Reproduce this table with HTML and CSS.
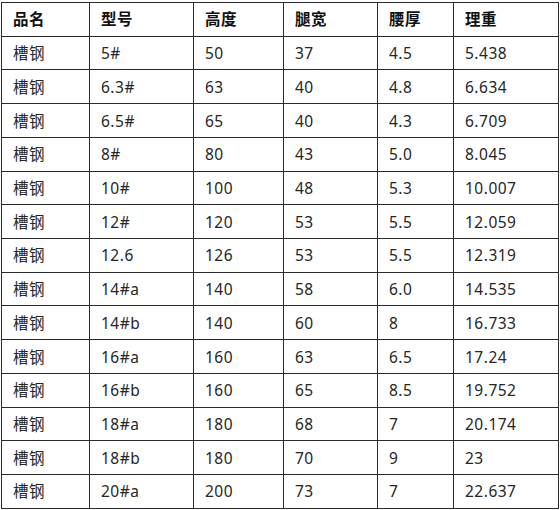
FILE: index.html
```html
<!DOCTYPE html>
<html lang="zh">
<head>
<meta charset="utf-8">
<link rel="stylesheet" href="styles.css">
</head>
<body>
<div class="wrap">
<table class="spec">
<colgroup>
<col class="c1"><col class="c2"><col class="c3"><col class="c4"><col class="c5"><col class="c6">
</colgroup>
<thead>
<tr><th>品名</th><th>型号</th><th>高度</th><th>腿宽</th><th>腰厚</th><th>理重</th></tr>
</thead>
<tbody>
<tr><td>槽钢</td><td>5#</td><td>50</td><td>37</td><td>4.5</td><td>5.438</td></tr>
<tr><td>槽钢</td><td>6.3#</td><td>63</td><td>40</td><td>4.8</td><td>6.634</td></tr>
<tr><td>槽钢</td><td>6.5#</td><td>65</td><td>40</td><td>4.3</td><td>6.709</td></tr>
<tr><td>槽钢</td><td>8#</td><td>80</td><td>43</td><td>5.0</td><td>8.045</td></tr>
<tr><td>槽钢</td><td>10#</td><td>100</td><td>48</td><td>5.3</td><td>10.007</td></tr>
<tr><td>槽钢</td><td>12#</td><td>120</td><td>53</td><td>5.5</td><td>12.059</td></tr>
<tr><td>槽钢</td><td>12.6</td><td>126</td><td>53</td><td>5.5</td><td>12.319</td></tr>
<tr><td>槽钢</td><td>14#a</td><td>140</td><td>58</td><td>6.0</td><td>14.535</td></tr>
<tr><td>槽钢</td><td>14#b</td><td>140</td><td>60</td><td>8</td><td>16.733</td></tr>
<tr><td>槽钢</td><td>16#a</td><td>160</td><td>63</td><td>6.5</td><td>17.24</td></tr>
<tr><td>槽钢</td><td>16#b</td><td>160</td><td>65</td><td>8.5</td><td>19.752</td></tr>
<tr><td>槽钢</td><td>18#a</td><td>180</td><td>68</td><td>7</td><td>20.174</td></tr>
<tr><td>槽钢</td><td>18#b</td><td>180</td><td>70</td><td>9</td><td>23</td></tr>
<tr><td>槽钢</td><td>20#a</td><td>200</td><td>73</td><td>7</td><td>22.637</td></tr>
</tbody>
</table>
</div>
</body>
</html>
```
FILE: styles.css
```css
html, body {
  margin: 0;
  padding: 0;
  background: #ffffff;
}
.wrap {
  padding: 2px 0 0 1px;
}
.spec {
  border-collapse: collapse;
  table-layout: fixed;
  width: 557px;
  font-family: "Noto Sans", "Noto Sans CJK SC", sans-serif;
  font-size: 15.5px;
  color: #262626;
}
.c1 { width: 88px; }
.c2 { width: 104px; }
.c3 { width: 90px; }
.c4 { width: 94px; }
.c5 { width: 76px; }
.c6 { width: 105px; }
.spec th,
.spec td {
  border: 1.5px solid #2a2a2a;
  height: 32.73px;
  padding: 0 0 0 11px;
  text-align: left;
  vertical-align: middle;
  line-height: 20px;
  letter-spacing: 0.5px;
}
.spec th {
  font-weight: 700;
  color: #111111;
}
```
